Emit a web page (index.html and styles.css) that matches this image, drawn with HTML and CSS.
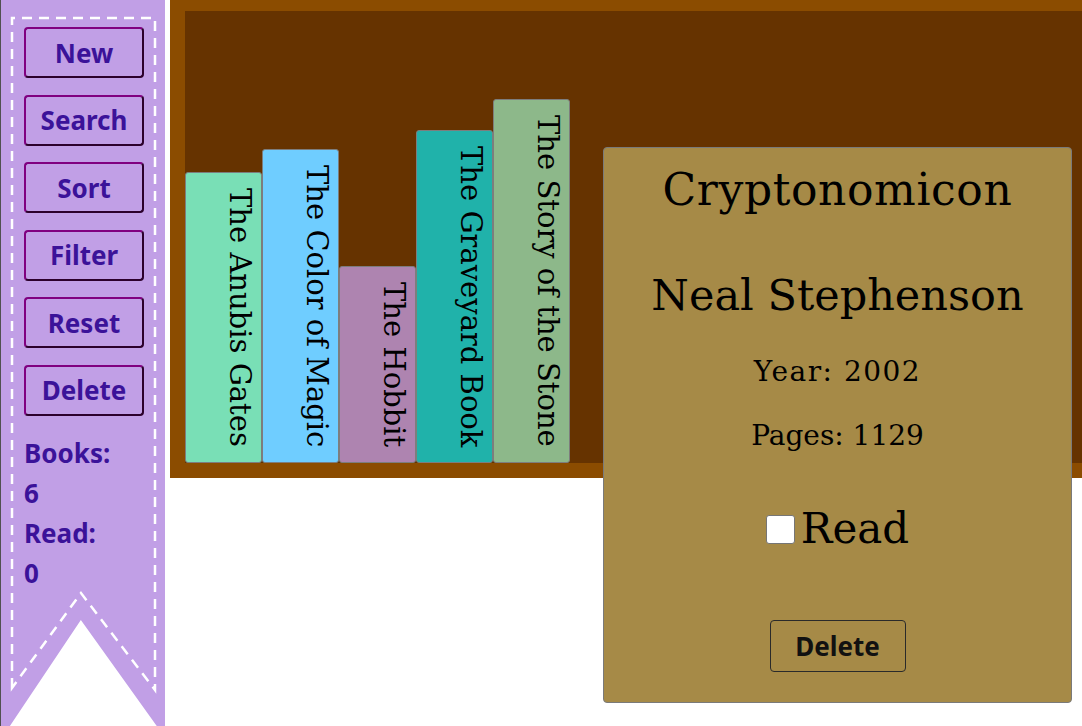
FILE: index.html
```html
<!DOCTYPE html>
<html lang="en">
<head>
<meta charset="utf-8">
<title>Library</title>
<link rel="stylesheet" href="styles.css">
</head>
<body>
<div class="app">
  <aside class="ribbon">
    <svg class="ribbon-stitch" viewBox="0 0 165 726" width="165" height="726" aria-hidden="true">
      <path d="M12 688 L12 18 L155 18 L155 690 L81 593 Z" fill="none" stroke="#ffffff" stroke-width="2.5" stroke-dasharray="10 7"/>
    </svg>
    <nav class="actions">
      <button class="action">New</button>
      <button class="action">Search</button>
      <button class="action">Sort</button>
      <button class="action">Filter</button>
      <button class="action">Reset</button>
      <button class="action">Delete</button>
    </nav>
    <div class="stats">
      <div>Books:</div>
      <div>6</div>
      <div>Read:</div>
      <div>0</div>
    </div>
  </aside>
  <main class="library">
    <div class="shelf">
      <div class="book book-aqua">The Anubis Gates</div>
      <div class="book book-sky">The Color of Magic</div>
      <div class="book book-mauve">The Hobbit</div>
      <div class="book book-teal">The Graveyard Book</div>
      <div class="book book-sage">The Story of the Stone</div>
    </div>
    <section class="card">
      <h2 class="card-title">Cryptonomicon</h2>
      <p class="card-author">Neal Stephenson</p>
      <p class="card-meta card-year">Year: 2002</p>
      <p class="card-meta card-pages">Pages: 1129</p>
      <label class="card-read"><input type="checkbox" class="read-box"><span>Read</span></label>
      <button class="card-delete">Delete</button>
    </section>
  </main>
</div>
</body>
</html>
```
FILE: styles.css
```css
* { box-sizing: border-box; }
html, body { margin: 0; padding: 0; }
body {
  background: #ffffff;
  overflow: hidden;
  width: 1082px;
  height: 726px;
}
.app {
  display: flex;
  height: 726px;
  gap: 5px;
}
.ribbon {
  position: relative;
  flex: 0 0 165px;
  height: 726px;
  background: #c19fe6;
  border-left: 1px solid #505050;
  clip-path: polygon(0 0, 100% 0, 100% 100%, 95% 100%, 49% calc(100% - 106px), 6% 100%, 0 100%);
  padding: 27px 0 0 23px;
  font-family: "Noto Sans", "Open Sans", sans-serif;
  font-weight: 700;
  color: #3b1299;
}
.ribbon-stitch {
  position: absolute;
  left: -1px;
  top: 0;
  pointer-events: none;
}
.actions {
  position: relative;
  display: flex;
  flex-direction: column;
  gap: 16.6px;
}
.action {
  width: 120px;
  height: 51px;
  background: transparent;
  border: 2px outset #800080;
  border-radius: 4px;
  font-family: inherit;
  font-weight: 700;
  font-size: 26px;
  color: #3b1299;
  padding: 0;
  line-height: 1;
}
.stats {
  position: relative;
  margin-top: 17px;
  font-size: 26px;
  line-height: 40px;
}
.library {
  position: relative;
  flex: 1;
}
.shelf {
  height: 478px;
  background: #663300;
  border-style: solid;
  border-color: #8b4c00;
  border-width: 11px 0 15px 15px;
  display: flex;
  align-items: flex-end;
}
.book {
  width: 77px;
  writing-mode: vertical-rl;
  font-family: "DejaVu Serif", serif;
  font-size: 29px;
  line-height: 1;
  padding: 15px 7px 15px 0;
  border: 1px solid #7d7d7d;
  border-radius: 3px;
  color: #000;
  white-space: nowrap;
}
.book-aqua { background: #79dfb6; }
.book-sky { background: #6fcdff; }
.book-mauve { background: #ae84b0; }
.book-teal { background: #20b2aa; }
.book-sage { background: #8db88a; }
.card {
  position: absolute;
  left: 433px;
  top: 147px;
  width: 469px;
  height: 556px;
  background: #a68a47;
  border: 1px solid #7a7a7a;
  border-radius: 4px;
  display: flex;
  flex-direction: column;
  align-items: center;
  padding-top: 20px;
  font-family: "DejaVu Serif", serif;
  color: #000;
}
.card-title {
  margin: 0;
  font-weight: 400;
  font-size: 44px;
  letter-spacing: 0.6px;
  line-height: 1;
}
.card-author {
  margin: 62px 0 0;
  font-size: 43px;
  line-height: 1;
}
.card-meta {
  margin: 41px 0 0;
  font-size: 28px;
  line-height: 1;
}
.card-year { letter-spacing: 1.5px; }
.card-pages { margin-top: 36px; }
.card-read {
  margin-top: 58px;
  display: flex;
  align-items: center;
  gap: 6px;
  font-size: 42px;
  line-height: 1;
}
.read-box {
  appearance: none;
  -webkit-appearance: none;
  margin: 0;
  width: 29px;
  height: 29px;
  background: #fff;
  border: 1px solid #767676;
  border-radius: 3px;
}
.card-delete {
  margin-top: 70px;
  width: 136px;
  height: 52px;
  background: transparent;
  border: 1px solid #2a2a2a;
  border-radius: 4px;
  font-family: "Noto Sans", "Open Sans", sans-serif;
  font-weight: 700;
  font-size: 26px;
  color: #111;
  padding: 0;
  line-height: 1;
}
```
